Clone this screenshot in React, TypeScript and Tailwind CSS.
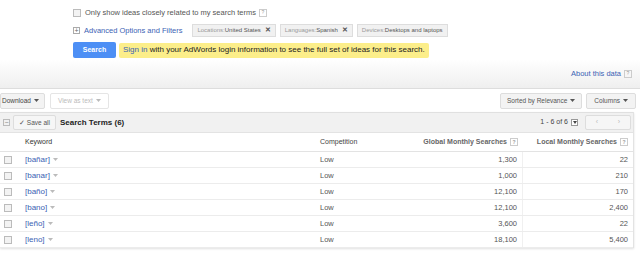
import React from "react";

const rows = [
  { kw: "[bañar]", g: "1,300", l: "22" },
  { kw: "[banar]", g: "1,000", l: "210" },
  { kw: "[baño]", g: "12,100", l: "170" },
  { kw: "[bano]", g: "12,100", l: "2,400" },
  { kw: "[leño]", g: "3,600", l: "22" },
  { kw: "[leno]", g: "18,100", l: "5,400" },
];

const Help = () => (
  <span className="ml-[3px] inline-flex h-[8px] w-[8px] items-center justify-center border border-[#ccc] text-[5px] leading-none text-[#999]">
    ?
  </span>
);

const Caret = ({ light }: { light?: boolean }) => (
  <svg width="5" height="3" viewBox="0 0 5 3" className="ml-[3px]">
    <path d="M0 0h5L2.5 3z" fill={light ? "#bbb" : "#555"} />
  </svg>
);

const Box = () => <span className="inline-block h-[8px] w-[8px] border border-[#bbb] bg-[#f3f3f3]" />;

const Chip = ({ label, value, x = true }: { label: string; value: string; x?: boolean }) => (
  <span className="flex h-[13px] items-center border border-[#ddd] bg-[#f1f1f1] px-[4px] text-[6px]">
    <span className="text-[#999]">{label}</span>
    <span className="text-[#555]">{value}</span>
    {x ? <span className="ml-[4px] text-[7px] font-bold text-[#555]">✕</span> : null}
  </span>
);

export default function App() {
  return (
    <div
      className="h-[257px] w-[640px] overflow-hidden bg-white text-[7px] text-[#333]"
      style={{ fontFamily: '"Liberation Sans", Arial, sans-serif' }}
    >
      <div className="pl-[73px] pt-[7px]">
        <div className="flex h-[11px] items-center">
          <Box />
          <span className="ml-[4px] text-[7.5px] text-[#555]">Only show ideas closely related to my search terms</span>
          <Help />
        </div>
        <div className="mt-[6px] flex h-[13px] items-center">
          <span className="flex h-[7px] w-[7px] items-center justify-center border border-[#aaa] text-[7px] leading-none text-[#666]">
            +
          </span>
          <span className="ml-[4px] mr-[10px] text-[7.5px] text-[#3b62b4]">Advanced Options and Filters</span>
          <div className="flex gap-[4px]">
            <Chip label="Locations:" value="United States" />
            <Chip label="Languages:" value="Spanish" />
            <Chip label="Devices: " value="Desktops and laptops" x={false} />
          </div>
        </div>
        <div className="mt-[5px] flex h-[16px] items-center gap-[3px]">
          <span className="flex h-[16px] w-[43px] items-center justify-center rounded-[2px] bg-[#4d8ff5] text-[7px] font-bold text-white">
            Search
          </span>
          <span className="flex h-[15px] items-center rounded-[2px] bg-[#fcee8a] px-[4px] text-[8px] text-[#222]">
            <span className="text-[#3b62b4]">Sign in</span>&nbsp;with your AdWords login information to see the full set of ideas for this search.
          </span>
        </div>
      </div>

      <div className="mt-[1px] flex h-[30px] items-center justify-end border-b border-[#ddd] bg-gradient-to-b from-white to-[#efefef] pr-[8px]">
        <span className="text-[7.5px] text-[#3b62b4]">About this data</span>
        <Help />
      </div>

      <div className="flex h-[23px] w-[636px] items-center justify-between">
        <div className="flex gap-[5px]">
          <span className="flex h-[16px] items-center rounded-[2px] border border-[#ddd] bg-[#f3f3f3] pl-[1px] pr-[5px] text-[6.5px] text-[#444]">
            Download
            <Caret />
          </span>
          <span className="flex h-[16px] items-center rounded-[2px] border border-[#e5e5e5] bg-white px-[7px] text-[6.5px] text-[#bbb]">
            View as text
            <Caret light />
          </span>
        </div>
        <div className="flex gap-[4px]">
          <span className="flex h-[16px] items-center rounded-[2px] border border-[#ddd] bg-[#f3f3f3] px-[6px] text-[6.5px] text-[#555]">
            Sorted by Relevance
            <Caret />
          </span>
          <span className="flex h-[16px] items-center rounded-[2px] border border-[#ddd] bg-[#f3f3f3] px-[7px] text-[6.5px] text-[#555]">
            Columns
            <Caret />
          </span>
        </div>
      </div>

      <div className="w-[634px] border-r border-[#e3e3e3] shadow-[0_1px_2px_rgba(0,0,0,0.12)]">
        <div className="flex h-[20px] items-center justify-between border-t border-[#e0e0e0] bg-[#f1f1f1]">
          <div className="flex items-center">
            <span className="ml-[3px] flex h-[7px] w-[7px] items-center justify-center border border-[#bbb] text-[7px] leading-none text-[#888]">
              −
            </span>
            <span className="ml-[3px] flex h-[15px] items-center rounded-[2px] border border-[#ddd] bg-[#f6f6f6] px-[5px] text-[6.5px] text-[#555]">
              ✓&nbsp;Save all
            </span>
            <span className="ml-[4px] text-[8px] font-bold text-[#222]">Search Terms (6)</span>
          </div>
          <div className="flex items-center">
            <span className="text-[7px] text-[#444]">1 - 6 of 6</span>
            <span className="ml-[3px] flex h-[7px] w-[7px] items-center justify-center border border-[#999] bg-white">
              <svg width="4" height="3" viewBox="0 0 4 3">
                <path d="M0 0h4L2 3z" fill="#444" />
              </svg>
            </span>
            <span className="ml-[7px] mr-[2px] flex h-[15px] w-[46px] rounded-[2px] border border-[#ddd] bg-[#f6f6f6] text-[7px] text-[#bbb]">
              <span className="flex flex-1 items-center justify-center">‹</span>
              <span className="flex flex-1 items-center justify-center">›</span>
            </span>
          </div>
        </div>

        <div className="flex h-[20px] items-center border-t border-b border-[#e3e3e3] bg-white text-[7px]">
          <span className="w-[25px]" />
          <span className="w-[295px] text-[#333]">Keyword</span>
          <span className="w-[84px] text-[#444]">Competition</span>
          <span className="flex w-[119px] items-center justify-end pr-[5px] font-bold text-[#666]">
            Global Monthly Searches
            <Help />
          </span>
          <span className="flex w-[110px] items-center justify-end pr-[5px] font-bold text-[#666]">
            Local Monthly Searches
            <Help />
          </span>
        </div>

        {rows.map((r) => (
          <div key={r.kw} className="flex h-[16px] items-center border-b border-[#ececec] text-[7.5px]">
            <span className="flex w-[25px] pl-[4px]">
              <Box />
            </span>
            <span className="flex w-[295px] items-center text-[8px] text-[#3b62b4]">
              {r.kw}
              <Caret light />
            </span>
            <span className="w-[84px] text-[#555]">Low</span>
            <span className="flex h-full w-[119px] items-center justify-end border-r border-[#f0f0f0] pr-[5px] text-[#555]">
              {r.g}
            </span>
            <span className="w-[110px] pr-[5px] text-right text-[#555]">{r.l}</span>
          </div>
        ))}
      </div>
    </div>
  );
}
